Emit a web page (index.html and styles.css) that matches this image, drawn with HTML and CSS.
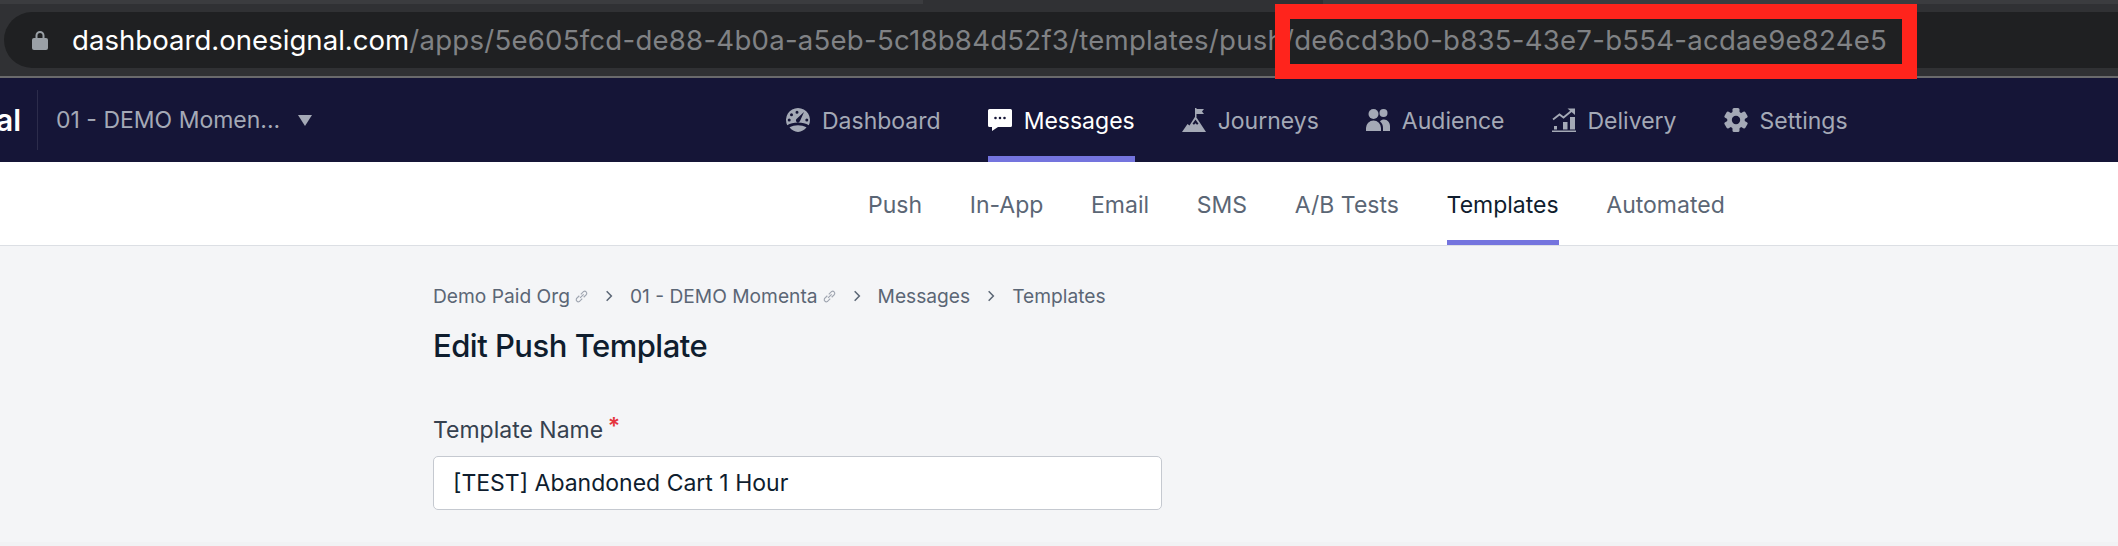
FILE: index.html
```html
<!DOCTYPE html>
<html lang="en">
<head>
  <meta charset="UTF-8" />
  <title>Edit Push Template</title>
  <link rel="stylesheet" href="styles.css">
</head>
<body>
  <!-- Browser bar -->
  <div class="browser">
    <div class="tab-strip">
      <div class="tab"></div>
      <div class="tab-gap"></div>
    </div>
    <div class="url-pill">
      <svg class="lock" viewBox="0 0 16 20"><path d="M3.500 9V5.500a4.500 4.500 0 0 1 9 0V9h-2V5.500a2.500 2.500 0 0 0-5 0V9z"/><rect x="0" y="8" width="16" height="12" rx="2"/></svg>
      <span class="url"><span class="host">dashboard.onesignal.com</span>/apps/5e605fcd-de88-4b0a-a5eb-5c18b84d52f3/templates/push/de6cd3b0-b835-43e7-b554-acdae9e824e5</span>
    </div>
    <div class="red-box"></div>
  </div>

  <!-- Main nav -->
  <div class="topnav">
    <div class="brand">al</div>
    <div class="app-select">
      <span>01 - DEMO Momen...</span>
      <span class="caret"></span>
    </div>
    <div class="menu">
      <a class="menu-item">
        <svg viewBox="0 0 24 24"><path fill-rule="evenodd" d="M12 0a12 12 0 0 1 10.800 17.200C20 15.400 16.300 14.600 12 14.600S4 15.400 1.200 17.200A12 12 0 0 1 12 0zM11 2.800a1.500 1.500 0 1 0 0 3 1.500 1.500 0 0 0 0-3zM5.500 5.200a1.500 1.500 0 1 0 0 3 1.500 1.500 0 0 0 0-3zM3.200 10.500a1.500 1.500 0 1 0 0 3 1.500 1.500 0 0 0 0-3zM20.800 10.500a1.500 1.500 0 1 0 0 3 1.500 1.500 0 0 0 0-3zM18 4l-7 6.500a2.100 2.100 0 1 0 3 2.500z"/><path d="M3.500 19.300C6 17.900 9 17.200 12 17.200s6 .7 8.500 2.100A12 12 0 0 1 12 24a12 12 0 0 1-8.500-4.700z"/></svg>
        Dashboard
      </a>
      <a class="menu-item active">
        <svg viewBox="0 0 24 24"><path fill-rule="evenodd" d="M1.500 1h21A1.500 1.500 0 0 1 24 2.500v15a1.500 1.500 0 0 1-1.500 1.500H10l-6 4v-4H1.500A1.500 1.500 0 0 1 0 17.500v-15A1.500 1.500 0 0 1 1.500 1zM7.500 8.700a1.300 1.300 0 1 0 0 2.600 1.300 1.300 0 0 0 0-2.600zM12 8.700a1.300 1.300 0 1 0 0 2.600 1.300 1.300 0 0 0 0-2.600zM16.500 8.700a1.300 1.300 0 1 0 0 2.600 1.300 1.300 0 0 0 0-2.600z"/></svg>
        Messages
      </a>
      <a class="menu-item">
        <svg viewBox="0 0 24 24"><path d="M13 0h1.500v1H22l-2 2.500L22 6h-7.500v3H13z"/><path fill-rule="evenodd" d="M13.500 8 24 24H0l5.500-8 2 1.500zM13.500 11.500l-3 4.200 1.500 1 1.500-1.500 1.500 1.500 1.500-1z"/></svg>
        Journeys
      </a>
      <a class="menu-item">
        <svg viewBox="0 0 24 24"><circle cx="7.500" cy="6" r="5"/><circle cx="17.500" cy="5" r="4"/><path d="M0 23v-3a7.500 7.500 0 0 1 15 0v3z"/><path d="M17 23v-3c0-3-1-5-3-6.500 1-1.500 2.500-2 4-2 3.500 0 6 3 6 6.500v5z"/></svg>
        Audience
      </a>
      <a class="menu-item">
        <svg viewBox="0 0 24 24"><path class="trend" d="M1 11.500 7.500 6.500l4 3L20 2.500"/><path d="M15.500 0.500H23V7z"/><rect x="2" y="18" width="3" height="3.500"/><rect x="11" y="14" width="4.500" height="7.500"/><rect x="18" y="9" width="5" height="12.500"/><rect x="0" y="22.500" width="24" height="1.500"/></svg>
        Delivery
      </a>
      <a class="menu-item">
        <svg viewBox="0 0 24 24"><circle cx="12" cy="12" r="8.800"/><rect x="8.500" y="0" width="7" height="24" rx="1.500"/><rect x="8.500" y="0" width="7" height="24" rx="1.500" transform="rotate(60 12 12)"/><rect x="8.500" y="0" width="7" height="24" rx="1.500" transform="rotate(120 12 12)"/><circle class="hole" cx="12" cy="12" r="4.200"/></svg>
        Settings
      </a>
    </div>
  </div>

  <!-- Sub nav -->
  <div class="subnav">
    <a class="sub-item">Push</a>
    <a class="sub-item">In-App</a>
    <a class="sub-item">Email</a>
    <a class="sub-item">SMS</a>
    <a class="sub-item">A/B Tests</a>
    <a class="sub-item active">Templates</a>
    <a class="sub-item">Automated</a>
  </div>

  <!-- Page content -->
  <div class="content">
    <div class="breadcrumb">
      <span>Demo Paid Org</span>
      <svg class="link-icon" viewBox="1.500 1.500 9 9"><path d="M5 7 7.500 4.500M4.500 5.500 2.500 7.500a1.500 1.500 0 0 0 2 2l2-2M5.500 4.500l2-2a1.500 1.500 0 0 1 2 2l-2 2"/></svg>
      <svg class="chevron" viewBox="0 0 8 12"><path d="M2 2l4 4-4 4"/></svg>
      <span>01 - DEMO Momenta</span>
      <svg class="link-icon" viewBox="1.500 1.500 9 9"><path d="M5 7 7.500 4.500M4.500 5.500 2.500 7.500a1.500 1.500 0 0 0 2 2l2-2M5.500 4.500l2-2a1.500 1.500 0 0 1 2 2l-2 2"/></svg>
      <svg class="chevron" viewBox="0 0 8 12"><path d="M2 2l4 4-4 4"/></svg>
      <span>Messages</span>
      <svg class="chevron" viewBox="0 0 8 12"><path d="M2 2l4 4-4 4"/></svg>
      <span>Templates</span>
    </div>
    <h1>Edit Push Template</h1>
    <label class="field-label">Template Name <span class="required">*</span></label>
    <div class="text-input">[TEST] Abandoned Cart 1 Hour</div>
  </div>
  <div class="card-edge"></div>
</body>
</html>
```

FILE: styles.css
```css
* { box-sizing: border-box; }
html, body { height: 546px; overflow: hidden; }
body {
  margin: 0;
  font-family: Inter, 'Noto Sans', sans-serif;
  background: #f4f5f7;
  display: flex;
  flex-direction: column;
}

.browser {
  position: relative;
  height: 78px;
  padding-left: 4px;
  background: #303134;
  border-bottom: 2px solid #6a6a6c;
}
.tab-strip {
  display: flex;
  height: 4px;
  margin: 0 0 8px -4px;
  background: #3b3c3f;
}
.tab { width: 923px; }
.tab-gap { width: 400px; background: #303134; }
.url-pill {
  height: 56px;
  background: #1f2022;
  border-radius: 28px 0 0 28px;
  display: flex;
  align-items: center;
  padding-left: 28px;
  white-space: nowrap;
  overflow: hidden;
}
.lock { width: 16px; height: 20px; fill: #9aa0a6; margin-right: 24px; }
.url {
  font-size: 27.600px;
  letter-spacing: 0.230px;
  color: #808285;
}
.host { color: #fff; letter-spacing: 0; }
.red-box {
  position: absolute;
  left: 1275px;
  top: 4px;
  width: 642px;
  height: 75px;
  border: 15px solid #ff241c;
}

.topnav {
  height: 84px;
  background: #151537;
  display: flex;
  align-items: center;
}
.brand {
  width: 41px;
  color: #fff;
  font-size: 30px;
  font-weight: 600;
  margin-left: -4px;
}
.app-select {
  height: 60px;
  width: 749px;
  border-left: 1px solid #2c2c4b;
  padding-left: 18px;
  display: flex;
  align-items: center;
  gap: 18px;
  color: #a4a9b6;
  font-size: 23px;
}
.caret {
  width: 0;
  height: 0;
  border-left: 7px solid transparent;
  border-right: 7px solid transparent;
  border-top: 11px solid #a4a9b6;
}
.menu {
  display: flex;
  gap: 47px;
  height: 100%;
}
.menu-item {
  display: flex;
  align-items: center;
  gap: 12px;
  color: #a4a9b6;
  font-size: 23px;
  border-bottom: 6px solid transparent;
  padding-top: 8px;
}
.menu-item svg { width: 24px; height: 24px; fill: #a4a9b6; margin-top: -2px; }
.menu-item .trend { fill: none; stroke: #a4a9b6; stroke-width: 1.800; }
.menu-item .hole { fill: #151537; }
.menu-item.active { color: #fff; border-bottom-color: #7474de; }
.menu-item.active svg { fill: #fff; }

.subnav {
  height: 84px;
  background: #fff;
  border-bottom: 1px solid #dcdfe4;
  display: flex;
  gap: 47.700px;
  padding-left: 868px;
}
.sub-item {
  display: flex;
  align-items: center;
  padding-top: 8px;
  color: #5b6675;
  font-size: 23px;
  border-bottom: 5px solid transparent;
}
.sub-item.active { color: #0f1d2e; border-bottom-color: #7474de; }

.content {
  padding: 38px 0 0 433px;
  flex: 1;
}
.breadcrumb {
  display: flex;
  align-items: center;
  color: #5b6675;
  font-size: 19.200px;
  height: 24px;
}
.link-icon {
  width: 13px;
  height: 13px;
  margin-left: 5px;
  fill: none;
  stroke: #a0a6b1;
  stroke-width: 0.800;
}
.chevron {
  width: 10px;
  height: 14px;
  margin: 0 16px;
  fill: none;
  stroke: #5b6675;
  stroke-width: 1.300;
}
h1 {
  margin: 18px 0 0;
  font-size: 31px;
  line-height: 40px;
  font-weight: 450;
  letter-spacing: -0.500px;
  color: #0f1d2e;
}
.field-label {
  display: block;
  margin-top: 49px;
  font-size: 23px;
  line-height: 30px;
  color: #36414f;
}
.required {
  color: #e5343d;
  font-weight: 600;
  position: relative;
  top: -4px;
  margin-left: -2px;
}
.text-input {
  margin-top: 11px;
  width: 729px;
  height: 54px;
  padding: 0 19px;
  display: flex;
  align-items: center;
  background: #fff;
  border: 1px solid #c5c9d0;
  border-radius: 5px;
  font-size: 23px;
  color: #0f1d2e;
}
.card-edge {
  height: 4px;
  background: #f1f2f4;
}
```
